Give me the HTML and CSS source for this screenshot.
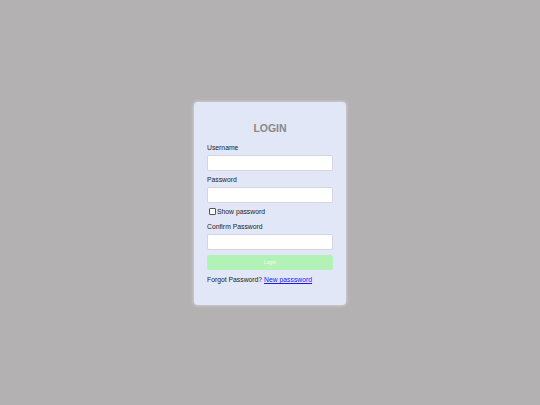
FILE: index.html
```html
<!DOCTYPE html>
<html>
<head>
<meta charset="utf-8">
<link rel="stylesheet" href="styles.css">
</head>
<body>
<div class="page">
  <div class="card">
    <h1 class="title">LOGIN</h1>
    <label class="label">Username</label>
    <div class="input"></div>
    <label class="label">Password</label>
    <div class="input"></div>
    <div class="check-row"><span class="checkbox"></span><span>Show password</span></div>
    <label class="label">Confirm Password</label>
    <div class="input"></div>
    <div class="button">Login</div>
    <div class="forgot">Forgot Password? <a class="link" href="#">New passsword</a></div>
  </div>
</div>
</body>
</html>
```
FILE: styles.css
```css
html, body { margin: 0; padding: 0; }
body {
  background: #b3b1b1;
  font-family: "Liberation Sans", Arial, sans-serif;
  width: 540px;
  height: 405px;
  overflow: hidden;
}
.page {
  display: flex;
  justify-content: center;
  padding-top: 102px;
}
.card {
  width: 152px;
  height: 203px;
  box-sizing: border-box;
  padding: 20px 13px 0 13px;
  background: #e2e7f7;
  border-radius: 4px;
  box-shadow: 0 0 3px 1px rgba(210,210,210,0.9);
  display: flex;
  flex-direction: column;
}
.title {
  margin: 0;
  font-size: 10.5px;
  line-height: 13px;
  font-weight: bold;
  text-align: center;
  color: #898989;
}
.label {
  font-size: 6.8px;
  line-height: 9px;
  color: #222;
  margin-top: 4px;
}
.title + .label { margin-top: 8px; }
.input {
  height: 16px;
  box-sizing: border-box;
  background: #fff;
  border: 1px solid #d3d6df;
  border-radius: 2px;
  margin-top: 3px;
}
.check-row {
  display: flex;
  align-items: center;
  gap: 1px;
  font-size: 6.8px;
  line-height: 9px;
  color: #222;
  margin-top: 4px;
}
.checkbox {
  width: 5px;
  height: 5px;
  border: 0.5px solid #555;
  border-radius: 1px;
  background: #fff;
  margin-left: 2px;
}
.check-row + .label { margin-top: 6px; }
.button {
  height: 15px;
  margin-top: 5px;
  background: #b2f2b6;
  border-radius: 2px;
  color: #f4fff4;
  font-size: 5px;
  line-height: 15px;
  text-align: center;
}
.forgot {
  margin-top: 5px;
  font-size: 6.8px;
  line-height: 9px;
  color: #222;
}
.link { color: #1a1aee; text-decoration: underline; }
```
